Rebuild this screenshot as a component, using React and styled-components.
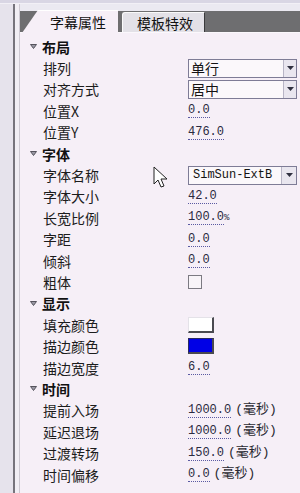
import React from 'react';
import styled, { createGlobalStyle } from 'styled-components';

const GlobalStyle = createGlobalStyle`
  html, body {
    margin: 0;
    padding: 0;
    background: #f6eff7;
  }
  * {
    box-sizing: border-box;
  }
`;

const CJK = `"Noto Sans CJK SC", "Noto Sans", sans-serif`;
const MONO = `"Liberation Mono", "Noto Sans CJK SC", monospace`;

const sections = [
  {
    title: '布局',
    rows: [
      { label: '排列', type: 'select', value: '单行' },
      { label: '对齐方式', type: 'select', value: '居中' },
      { label: '位置X', type: 'num', value: '0.0' },
      { label: '位置Y', type: 'num', value: '476.0' },
    ],
  },
  {
    title: '字体',
    rows: [
      { label: '字体名称', type: 'font', value: 'SimSun-ExtB' },
      { label: '字体大小', type: 'num', value: '42.0' },
      { label: '长宽比例', type: 'num', value: '100.0', suffix: '%' },
      { label: '字距', type: 'num', value: '0.0' },
      { label: '倾斜', type: 'num', value: '0.0' },
      { label: '粗体', type: 'check' },
    ],
  },
  {
    title: '显示',
    rows: [
      { label: '填充颜色', type: 'color', value: '#ffffff' },
      { label: '描边颜色', type: 'color', value: '#0000e6', dark: true },
      { label: '描边宽度', type: 'num', value: '6.0' },
    ],
  },
  {
    title: '时间',
    rows: [
      { label: '提前入场', type: 'num', value: '1000.0', unit: '(毫秒)' },
      { label: '延迟退场', type: 'num', value: '1000.0', unit: '(毫秒)' },
      { label: '过渡转场', type: 'num', value: '150.0', unit: '(毫秒)' },
      { label: '时间偏移', type: 'num', value: '0.0', unit: '(毫秒)' },
    ],
  },
];

const Arrow = () => (
  <svg width="7" height="5" viewBox="0 0 7 5">
    <polygon points="0.5,0.5 6.5,0.5 3.5,4.5" fill="#9a98a4" stroke="#55535c" strokeWidth="1" />
  </svg>
);

const DropArrow = () => (
  <svg width="7" height="4" viewBox="0 0 7 4">
    <polygon points="0,0 7,0 3.5,4" fill="#303040" />
  </svg>
);

const Cursor = () => (
  <svg width="16" height="24" viewBox="0 0 16 24">
    <path
      d="M1 1 L1 18 L5 14 L8 21 L11 20 L8 13 L14 13 Z"
      fill="#ffffff"
      stroke="#222"
      strokeWidth="1"
      strokeLinejoin="round"
    />
  </svg>
);

const renderValue = row => {
  switch (row.type) {
    case 'select':
      return (
        <Select>
          <SelectText>{row.value}</SelectText>
          <DropButton>
            <DropArrow />
          </DropButton>
        </Select>
      );
    case 'font':
      return (
        <Select>
          <SelectText $mono>{row.value}</SelectText>
          <DropButton $wide>
            <DropArrow />
          </DropButton>
        </Select>
      );
    case 'check':
      return <CheckBox />;
    case 'color':
      return <Swatch $color={row.value} $dark={row.dark} />;
    default:
      return (
        <ValueLine>
          <Num>{row.value}</Num>
          {row.suffix && <Suffix>{row.suffix}</Suffix>}
          {row.unit && <Unit>{row.unit}</Unit>}
        </ValueLine>
      );
  }
};

const App = () => {
  return (
    <>
      <GlobalStyle />
      <Window>
        <TopStrip />
        <Body>
          <Gutter />
          <Divider />
          <Main>
            <TabHead />
            <TabBar>
              <ActiveTab>字幕属性</ActiveTab>
              <Tab>模板特效</Tab>
            </TabBar>
            <List>
              {sections.map(section => (
                <React.Fragment key={section.title}>
                  <SectionRow>
                    <Arrow />
                    <SectionTitle>{section.title}</SectionTitle>
                  </SectionRow>
                  {section.rows.map(row => (
                    <Row key={row.label}>
                      <Label>{row.label}</Label>
                      <ValueCell>{renderValue(row)}</ValueCell>
                    </Row>
                  ))}
                </React.Fragment>
              ))}
            </List>
            <CursorWrap>
              <Cursor />
            </CursorWrap>
          </Main>
        </Body>
      </Window>
    </>
  );
};

const Window = styled.div`
  width: 300px;
  height: 493px;
  overflow: hidden;
  display: flex;
  flex-direction: column;
  background: #f6eff7;
`;

const TopStrip = styled.div`
  height: 4px;
  background: #d9d6e4;
  border-bottom: 1px solid #f2f0f6;
`;

const Body = styled.div`
  flex: 1;
  display: flex;
`;

const Gutter = styled.div`
  width: 13px;
  background: #e6e3ec;
`;

const Divider = styled.div`
  width: 7px;
  background: #f1eef4;
  border-left: 2px solid #76747c;
  border-right: 1px solid #cdc9d2;
`;

const Main = styled.div`
  flex: 1;
  position: relative;
  display: flex;
  flex-direction: column;
`;

const TabHead = styled.div`
  height: 7px;
  background: #ebe9f1;
`;

const TabBar = styled.div`
  height: 22px;
  display: flex;
  align-items: flex-end;
  gap: 4px;
  padding-left: 2px;
  background: #6e6e70;
  border-bottom: 1px solid #fbf8fc;
`;

const ActiveTab = styled.div`
  width: 96px;
  height: 23px;
  margin-bottom: -1px;
  padding-left: 28px;
  display: flex;
  align-items: center;
  background: #f6eff7;
  border-top: 1px solid #ffffff;
  clip-path: polygon(16px 0, 100% 0, 100% 100%, 0 100%);
  font-family: ${CJK};
  font-size: 14px;
  color: #111;
  line-height: 1;
`;

const Tab = styled.div`
  width: 83px;
  height: 20px;
  padding-left: 14px;
  display: flex;
  align-items: center;
  background: #e3e1e7;
  border-top: 1px solid #fafafa;
  border-left: 1px solid #fafafa;
  border-right: 1px solid #3a3a3c;
  border-top-left-radius: 3px;
  font-family: ${CJK};
  font-size: 14px;
  color: #111;
  line-height: 1;
`;

const List = styled.div`
  padding-top: 3px;
  display: flex;
  flex-direction: column;
`;

const SectionRow = styled.div`
  height: 21.4px;
  display: flex;
  align-items: center;
  gap: 5px;
  padding-left: 10px;
`;

const SectionTitle = styled.span`
  font-family: ${CJK};
  font-size: 14px;
  font-weight: 700;
  color: #111;
  line-height: 1;
`;

const Row = styled.div`
  height: 21.4px;
  display: grid;
  grid-template-columns: 145px 1fr;
  align-items: center;
  padding-left: 23px;
  padding-right: 3px;
`;

const Label = styled.span`
  font-family: ${CJK};
  font-size: 14px;
  color: #1c1c1c;
  line-height: 1;
`;

const ValueCell = styled.div`
  display: flex;
  align-items: center;
  min-width: 0;
`;

const Select = styled.div`
  width: 110px;
  height: 19px;
  display: flex;
  align-items: stretch;
  background: #fbf8fb;
  border: 1px solid #7e7c96;
`;

const SelectText = styled.span`
  flex: 1;
  display: flex;
  align-items: center;
  padding-left: ${p => (p.$mono ? '4px' : '2px')};
  font-family: ${p => (p.$mono ? MONO : CJK)};
  font-size: ${p => (p.$mono ? '12px' : '14px')};
  color: #141414;
  line-height: 1;
`;

const DropButton = styled.span`
  width: ${p => (p.$wide ? '15px' : '13px')};
  display: flex;
  align-items: center;
  justify-content: center;
  background: #e9e6ef;
  border-left: 1px solid #b8b5c6;
`;

const ValueLine = styled.div`
  display: flex;
  align-items: baseline;
`;

const Num = styled.span`
  font-family: ${MONO};
  font-size: 12px;
  color: #2a2a40;
  line-height: 14px;
  border-bottom: 1px dotted #5a5aa2;
`;

const Suffix = styled.span`
  font-family: ${MONO};
  font-size: 9px;
  color: #2a2a40;
`;

const Unit = styled.span`
  margin-left: 4px;
  font-family: ${MONO};
  font-size: 13px;
  color: #2a2a32;
  line-height: 14px;
`;

const CheckBox = styled.span`
  width: 14px;
  height: 14px;
  border: 1px solid #7c7a82;
  background: #f8f4f8;
`;

const Swatch = styled.span`
  width: 26px;
  height: 16px;
  background: ${p => p.$color};
  border-top: 1px solid ${p => (p.$dark ? '#2a2a60' : '#e4e2e8')};
  border-left: 1px solid ${p => (p.$dark ? '#2a2a60' : '#e4e2e8')};
  border-right: 2px solid #4a4a50;
  border-bottom: 2px solid #4a4a50;
`;

const CursorWrap = styled.div`
  position: absolute;
  left: 133px;
  top: 162px;
  pointer-events: none;
`;

export default App;
